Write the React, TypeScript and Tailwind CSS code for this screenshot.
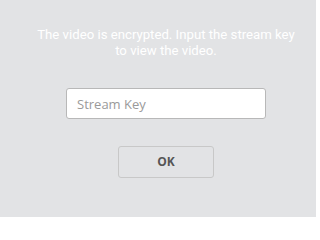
export default function App() {
  return (
    <div className="w-[316px] h-[217px] bg-[#e2e3e5] pl-[16px] flex flex-col items-center font-['Roboto',sans-serif]">
      <p className="mt-[27px] w-[268px] text-center text-[13.2px] leading-[16px] font-normal text-white">
        The video is encrypted. Input the stream key to view the video.
      </p>
      <input
        type="text"
        placeholder="Stream Key"
        className="mt-[29px] w-[200px] h-[31px] rounded-[3px] border border-[#b8b8b8] bg-white px-[10px] text-[13px] text-[#333] placeholder:text-[#9a9a9a] outline-none font-['Open_Sans',sans-serif]"
      />
      <button className="mt-[27px] w-[96px] h-[32px] rounded-[3px] border border-[#c8c8c8] bg-[#e2e3e5] text-[12px] font-bold text-[#555] font-['Open_Sans',sans-serif]">
        OK
      </button>
    </div>
  );
}
